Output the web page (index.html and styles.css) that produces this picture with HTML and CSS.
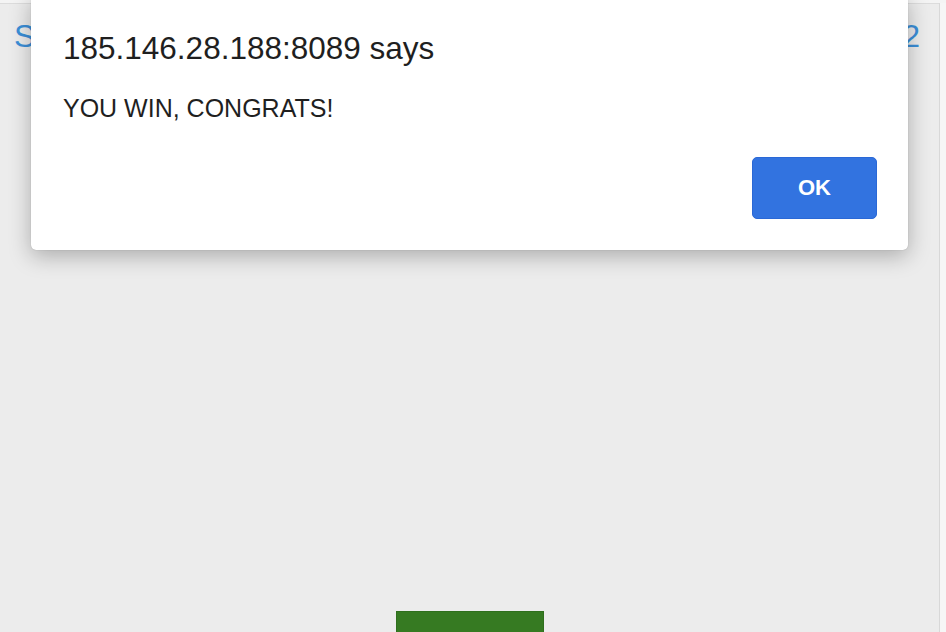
FILE: index.html
```html
<!DOCTYPE html>
<html>
<head>
<meta charset="utf-8">
<link rel="stylesheet" href="styles.css">
</head>
<body>
<div class="viewport">
  <main class="page">
    <header class="topbar">
      <span class="link">S</span>
      <span class="link">2</span>
    </header>
    <div class="stage"></div>
    <div class="footer">
      <div class="green-btn"></div>
    </div>
  </main>
  <div class="scroll-strip"></div>
</div>
<div class="dialog">
  <div class="dialog-title">185.146.28.188:8089 says</div>
  <div class="dialog-msg">YOU WIN, CONGRATS!</div>
  <div class="dialog-actions">
    <button class="ok-btn">OK</button>
  </div>
</div>
</body>
</html>
```
FILE: styles.css
```css
html, body {
  margin: 0;
  padding: 0;
  width: 946px;
  height: 632px;
  overflow: hidden;
  font-family: "Liberation Sans", Arial, sans-serif;
}
.viewport {
  display: flex;
  height: 632px;
  border-top: 3px solid #f4f4f4;
  box-sizing: border-box;
}
.page {
  flex: 1;
  display: flex;
  flex-direction: column;
  background: #ececec;
  border-top: 1px solid #dcdcdc;
}
.topbar {
  display: flex;
  justify-content: space-between;
  padding: 14px 19px 0 14px;
}
.link {
  color: #3b8fd8;
  font-size: 32px;
  line-height: 36px;
  white-space: nowrap;
}
.stage { flex: 1; }
.footer {
  display: flex;
  justify-content: center;
}
.green-btn {
  width: 146px;
  height: 20px;
  background: #367a22;
  border: 1px solid #2f6f1d;
  border-bottom: none;
}
.scroll-strip {
  width: 6px;
  background: #f6f6f6;
  border-left: 1px solid #d8d8d8;
}
.dialog {
  position: absolute;
  left: 31px;
  top: -6px;
  width: 877px;
  height: 256px;
  background: #fff;
  border-radius: 5px;
  box-shadow: 0 6px 22px rgba(0,0,0,0.28), 0 0 1px rgba(0,0,0,0.3);
  box-sizing: border-box;
  padding: 36px 31px 0 32px;
  display: flex;
  flex-direction: column;
}
.dialog-title {
  font-size: 31.5px;
  color: #1f1f1f;
  line-height: 36px;
}
.dialog-msg {
  font-size: 25px;
  color: #1f1f1f;
  margin-top: 27px;
  line-height: 30px;
}
.dialog-actions {
  display: flex;
  justify-content: flex-end;
  margin-top: 34px;
}
.ok-btn {
  width: 125px;
  height: 62px;
  background: #3273e0;
  border: 1px solid #2a68d6;
  border-radius: 5px;
  color: #fff;
  font-family: "Liberation Sans", Arial, sans-serif;
  font-weight: bold;
  font-size: 22px;
  padding: 0;
}
```
